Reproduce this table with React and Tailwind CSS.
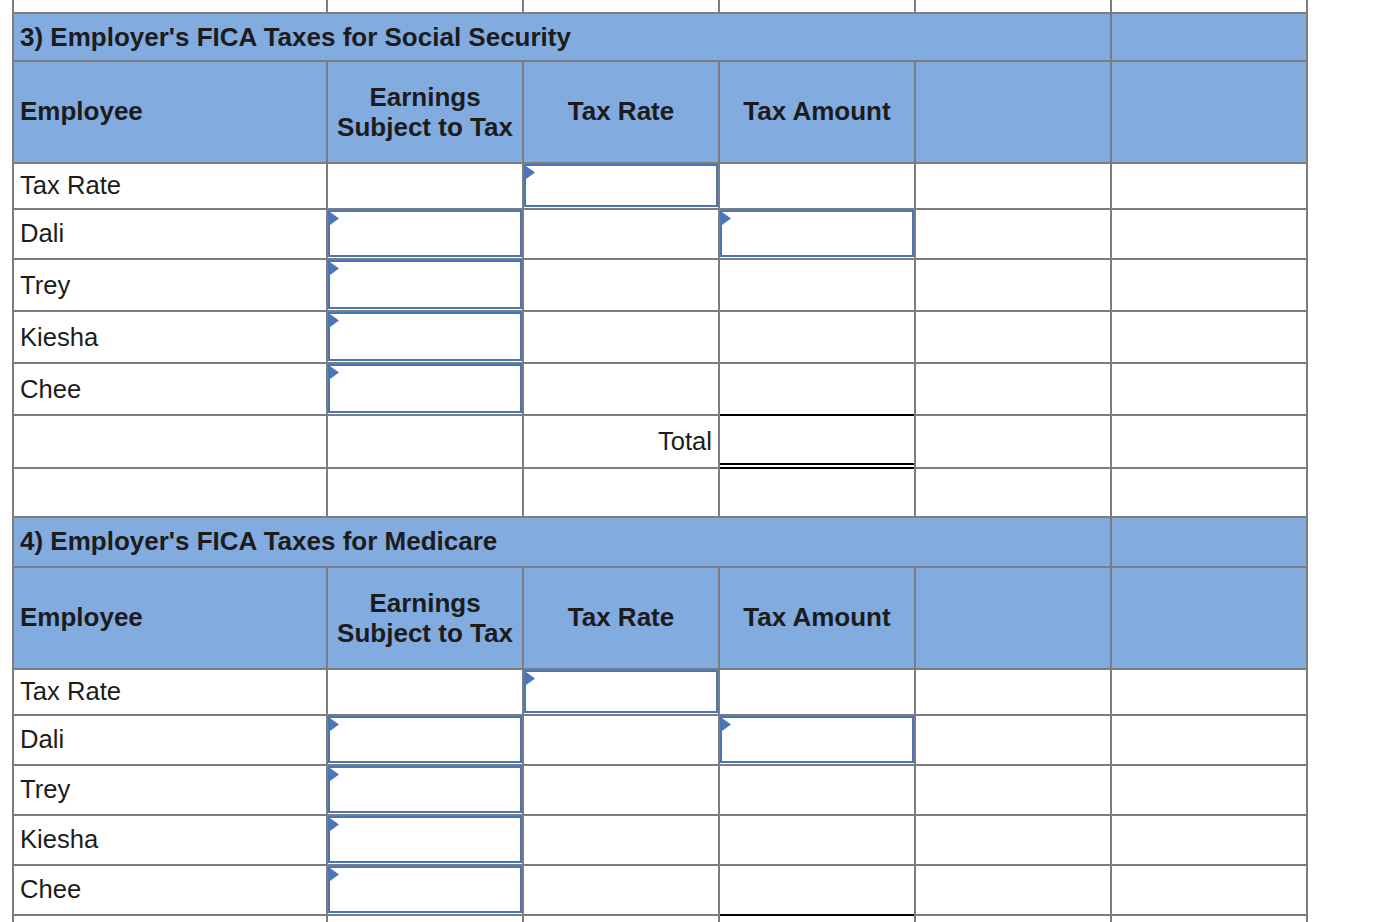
import React from "react";

const BLUE = "bg-[#82abe0]";

function Input() {
  return (
    <div className="relative h-[calc(100%-1px)] w-full border-2 border-[#4a76b8] bg-white">
      <svg className="absolute left-0 top-0" width="9" height="13" viewBox="0 0 9 13">
        <polygon points="0,0 9,6.5 0,13" fill="#4a76b8" />
      </svg>
    </div>
  );
}

function Cell({ children, className = "" }) {
  return <div className={`relative bg-white ${className}`}>{children}</div>;
}

function TotalCell({ last }) {
  return (
    <div className="relative bg-white">
      <span className="absolute left-0 right-0 top-[-2px] h-[2px] bg-black" />
      {!last && <span className="absolute left-0 right-0 bottom-[2px] h-[2px] bg-black" />}
      {!last && <span className="absolute left-0 right-0 bottom-[-2px] h-[2px] bg-black" />}
    </div>
  );
}

function Label({ children, tall }) {
  return (
    <div className={`flex items-center bg-white pl-[6px] ${tall ? "" : "pb-[2px]"}`}>{children}</div>
  );
}

function Section({ num, title, pad, tall }) {
  return (
    <>
      <div className={`col-span-5 flex items-center ${BLUE} pl-[6px] ${pad} text-[26px] font-bold`}>
        {num}) {title}
      </div>
      <div className={BLUE} />
      <div className={`flex items-center ${BLUE} pb-[2px] pl-[6px] text-[26px] font-bold`}>Employee</div>
      <div className={`flex items-center justify-center ${BLUE} text-center text-[26px] font-bold leading-[30px]`}>
        Earnings
        <br />
        Subject to Tax
      </div>
      <div className={`flex items-center justify-center ${BLUE} pb-[2px] text-[26px] font-bold`}>Tax Rate</div>
      <div className={`flex items-center justify-center ${BLUE} pb-[2px] text-[26px] font-bold`}>Tax Amount</div>
      <div className={BLUE} />
      <div className={BLUE} />
      {/* Tax Rate row */}
      <Label>Tax Rate</Label>
      <Cell />
      <Cell><Input /></Cell>
      <Cell />
      <Cell />
      <Cell />
      {/* Dali */}
      <Label>Dali</Label>
      <Cell><Input /></Cell>
      <Cell />
      <Cell><Input /></Cell>
      <Cell />
      <Cell />
      {["Trey", "Kiesha", "Chee"].map((n) => (
        <React.Fragment key={n}>
          <Label tall={tall}>{n}</Label>
          <Cell><Input /></Cell>
          <Cell />
          <Cell />
          <Cell />
          <Cell />
        </React.Fragment>
      ))}
    </>
  );
}

export default function App() {
  return (
    <div className="h-[922px] w-[1384px] overflow-hidden bg-white font-['Liberation_Sans',Arial,sans-serif] text-[25.6px] text-[#1c1c1c]">
      <div className="ml-[12px] grid w-[1296px] grid-cols-[312px_194px_194px_194px_194px_194px] grid-rows-[12px_46px_100px_44px_48px_50px_50px_50px_51px_47px_48px_100px_44px_48px_48px_48px_48px_60px] gap-[2px] bg-[#7d7d7d] px-[2px]">
        {/* top partial row */}
        <Cell /><Cell /><Cell /><Cell /><Cell /><Cell />
        <Section num={3} title="Employer's FICA Taxes for Social Security" pad="pt-[1px]" tall />
        {/* Total row */}
        <Cell />
        <Cell />
        <div className="flex items-center justify-end bg-white pr-[6px]">Total</div>
        <TotalCell />
        <Cell />
        <Cell />
        {/* blank row */}
        <Cell /><Cell /><Cell /><Cell /><Cell /><Cell />
        <Section num={4} title="Employer's FICA Taxes for Medicare" pad="pb-[1px]" />
        <Cell />
        <Cell />
        <Cell />
        <TotalCell last />
        <Cell />
        <Cell />
      </div>
    </div>
  );
}
